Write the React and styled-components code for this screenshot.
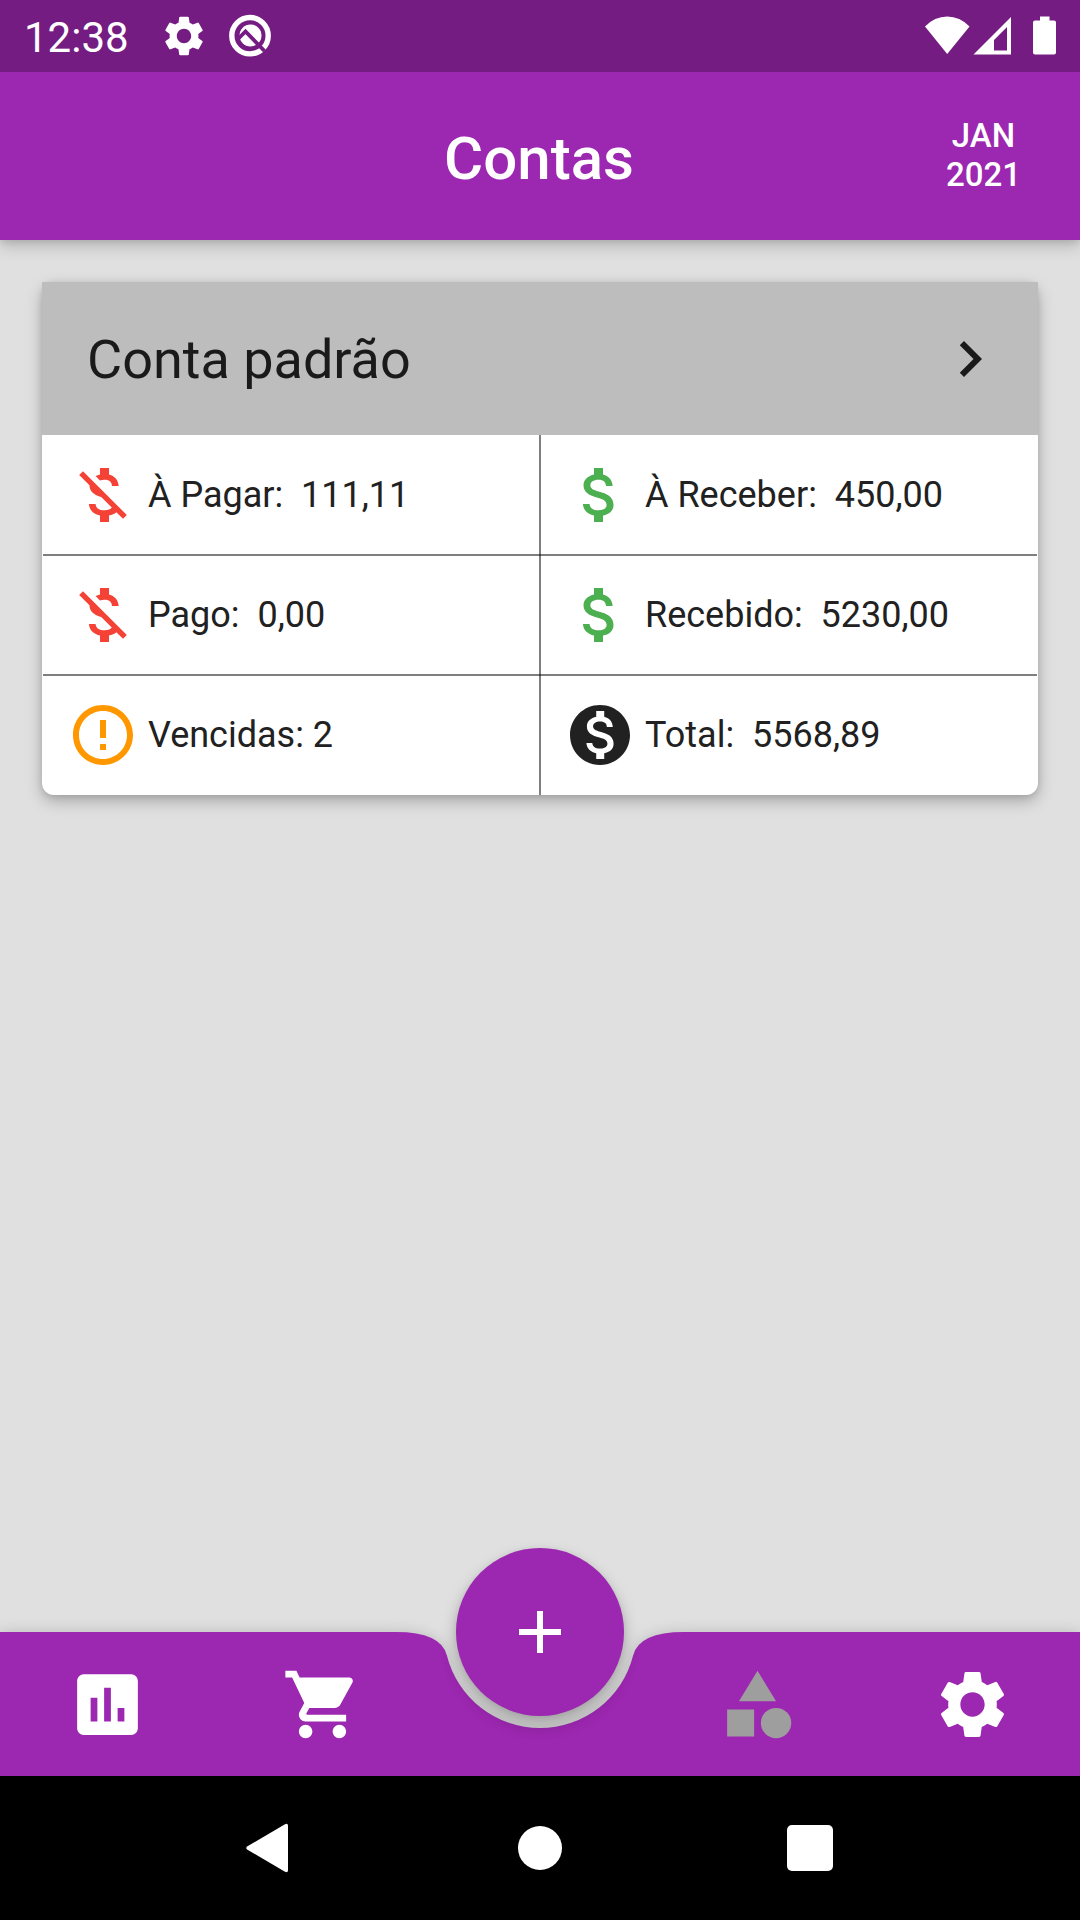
import styled, { createGlobalStyle } from 'styled-components';
import {
  MdAttachMoney,
  MdCategory,
  MdErrorOutline,
  MdInsertChart,
  MdMonetizationOn,
  MdMoneyOff,
  MdNavigateNext,
  MdSettings,
  MdShoppingCart,
} from 'react-icons/md';

const rows = [
  { label: 'À Pagar:  111,11', icon: MdMoneyOff, color: '#f44336' },
  { label: 'À Receber:  450,00', icon: MdAttachMoney, color: '#4caf50' },
  { label: 'Pago:  0,00', icon: MdMoneyOff, color: '#f44336' },
  { label: 'Recebido:  5230,00', icon: MdAttachMoney, color: '#4caf50' },
  { label: 'Vencidas: 2', icon: MdErrorOutline, color: '#ff9800' },
  { label: 'Total:  5568,89', icon: MdMonetizationOn, color: '#212121' },
];

function BetaIcon() {
  return (
    <svg width="44" height="44" viewBox="0 0 44 44" fill="none">
      <circle cx="22" cy="21.700" r="18.2" stroke="#fff" strokeWidth="5.4" />
      <circle cx="22.500" cy="21.500" r="11" fill="#fff" />
      <path d="M10.500 24.500l7-7L36.500 37" stroke="#751c82" strokeWidth="3.8" />
    </svg>
  );
}

function SystemStatus() {
  return (
    <svg width="132" height="40" viewBox="0 0 132 40" fill="#fff">
      <path d="M0 10.500Q9.500 0.500 22.200 0.500T44.500 10.500L22.200 38Z" />
      <path
        fillRule="evenodd"
        d="M48.500 38.500L86 1V38.500ZM69 34.500H82V11L69 24Z"
      />
      <path d="M115 0.500h9.500v4h4.500a2 2 0 0 1 2 2v30a2 2 0 0 1-2 2h-19a2 2 0 0 1-2-2v-30a2 2 0 0 1 2-2h5z" />
    </svg>
  );
}

function App() {
  return (
    <Screen>
      <GlobalStyle />
      <StatusBar>
        <Clock>12:38</Clock>
        <MdSettings size={48} />
        <BetaIcon />
        <Spacer />
        <SystemStatus />
      </StatusBar>
      <AppBar>
        <Title>Contas</Title>
        <Period>
          JAN
          <br />
          2021
        </Period>
      </AppBar>
      <Content>
        <Card>
          <CardHeader>
            <AccountName>Conta padrão</AccountName>
            <MdNavigateNext size={72} />
          </CardHeader>
          <Table>
            {rows.map(({ label, icon: Icon, color }) => (
              <Cell key={label}>
                <Icon size={72} color={color} />
                <Label>{label}</Label>
              </Cell>
            ))}
          </Table>
        </Card>
      </Content>
      <Bottom>
        <BottomShadow>
          <BottomBar>
            <Tab>
              <MdInsertChart />
            </Tab>
            <Tab>
              <MdShoppingCart />
            </Tab>
            <span />
            <Tab $selected>
              <MdCategory />
            </Tab>
            <Tab>
              <MdSettings />
            </Tab>
          </BottomBar>
        </BottomShadow>
        <AddButton>
          <svg width="42" height="42" viewBox="0 0 42 42" fill="#fff">
            <path d="M18 0h6v18h18v6H24v18h-6V24H0v-6h18z" />
          </svg>
        </AddButton>
      </Bottom>
      <NavigationBar>
        <svg width="48" height="52" viewBox="0 0 48 52" fill="#fff">
          <path d="M1.500 24.200L39 2.300Q42 0.800 42 4V48Q42 51.200 39 49.700L1.500 27.800Q-1 26 1.500 24.200Z" />
        </svg>
        <HomeDot />
        <RecentSquare />
      </NavigationBar>
    </Screen>
  );
}

const GlobalStyle = createGlobalStyle`
  * {
    box-sizing: border-box;
  }

  body {
    margin: 0;
    font-family: Roboto, sans-serif;
    background: #e0e0e0;
  }

  svg {
    display: block;
    flex-shrink: 0;
  }
`;

const Screen = styled.div`
  display: flex;
  flex-direction: column;
  width: 1080px;
  height: 1920px;
  overflow: hidden;
  background: #e0e0e0;
`;

const StatusBar = styled.header`
  display: flex;
  align-items: center;
  height: 72px;
  padding: 0 23px 0 24px;
  color: white;
  background: #751c82;
  z-index: 2;

  svg + svg {
    margin-left: 20px;
  }
`;

const Clock = styled.span`
  width: 136px;
  padding-top: 4px;
  font-size: 42px;
  line-height: 50px;
`;

const Spacer = styled.div`
  flex: 1;
`;

const AppBar = styled.div`
  display: grid;
  grid-template-columns: 193px 1fr 193px;
  align-items: center;
  height: 168px;
  color: white;
  background: #9c27b0;
  box-shadow: 0 6px 15px rgba(0, 0, 0, 0.2), 0 2px 6px rgba(0, 0, 0, 0.08);
  z-index: 1;
`;

const Title = styled.h1`
  grid-column: 2;
  margin: 0;
  padding: 6px 2px 0 0;
  font-size: 60px;
  font-weight: 500;
  line-height: 70px;
  text-align: center;
`;

const Period = styled.div`
  padding-bottom: 2px;
  font-size: 33px;
  font-weight: 500;
  line-height: 39px;
  text-align: center;
`;

const Content = styled.main`
  flex: 1;
  padding: 42px;
`;

const Card = styled.section`
  border-radius: 12px;
  background: white;
  box-shadow: 0 6px 16px rgba(0, 0, 0, 0.26), 0 1px 6px rgba(0, 0, 0, 0.1);
`;

const CardHeader = styled.div`
  display: flex;
  align-items: center;
  justify-content: space-between;
  height: 153px;
  padding: 0 32.5px 0 45px;
  color: #1a1a1a;
  background: #bdbdbd;
`;

const AccountName = styled.h2`
  margin: 0;
  padding-top: 2px;
  font-size: 54px;
  font-weight: 400;
`;

const Table = styled.div`
  display: grid;
  grid-template-columns: 1fr 1fr;
  grid-auto-rows: 120px;
  margin: 0 1px;
  background: linear-gradient(#00000080, #00000080) 50% 0 / 2px 100% no-repeat,
    linear-gradient(#00000080, #00000080) 0 119px / 100% 2px no-repeat,
    linear-gradient(#00000080, #00000080) 0 239px / 100% 2px no-repeat;
`;

const Cell = styled.div`
  display: flex;
  align-items: center;
  gap: 9px;
  padding-left: 24px;
  color: #212121;
`;

const Label = styled.span`
  font-size: 36px;
  line-height: 42px;
  white-space: pre;
`;

const Bottom = styled.footer`
  position: relative;
`;

const BottomShadow = styled.div`
  filter: drop-shadow(0 0 7px rgba(0, 0, 0, 0.16));
`;

const BottomBar = styled.nav`
  display: grid;
  grid-template-columns: 215px 215px 1fr 215px 215px;
  height: 144px;
  background: #9c27b0;
  clip-path: path(
    'M0 0H396Q441 0 446.900 23.500A96 96 0 0 0 633.100 23.500Q639 0 684 0H1080V144H0Z'
  );
`;

const Tab = styled.div`
  display: flex;
  align-items: center;
  justify-content: center;
  font-size: 81px;
  color: ${({ $selected }) => ($selected ? '#9e9e9e' : 'white')};
`;

/* floats over the notch of the bottom bar */
const AddButton = styled.div`
  position: absolute;
  top: -84px;
  left: 50%;
  display: flex;
  align-items: center;
  justify-content: center;
  width: 168px;
  height: 168px;
  border-radius: 50%;
  transform: translateX(-50%);
  background: #9c27b0;
  box-shadow: 0 8px 16px rgba(0, 0, 0, 0.26), 0 1px 6px rgba(0, 0, 0, 0.06);
`;

const NavigationBar = styled.div`
  display: grid;
  grid-template-columns: repeat(3, 270px);
  align-items: center;
  justify-content: center;
  justify-items: center;
  height: 144px;
  background: black;
  z-index: 1;
`;

const HomeDot = styled.div`
  width: 44px;
  height: 44px;
  border-radius: 50%;
  background: white;
`;

const RecentSquare = styled.div`
  width: 46px;
  height: 46px;
  border-radius: 5px;
  background: white;
`;

export default App;
